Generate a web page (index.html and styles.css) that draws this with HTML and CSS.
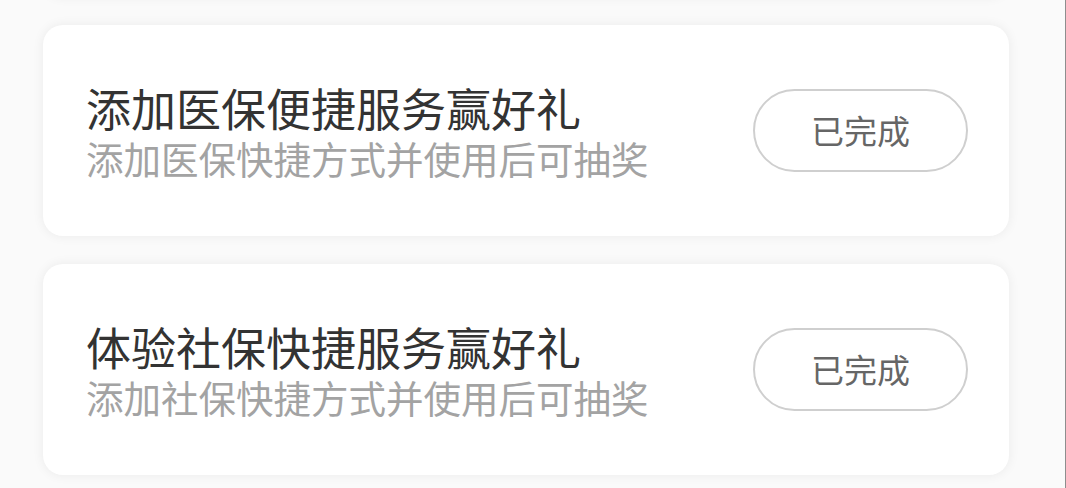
FILE: index.html
```html
<!DOCTYPE html>
<html lang="zh-CN">
<head>
  <meta charset="UTF-8">
  <meta name="viewport" content="width=device-width, initial-scale=1">
  <title>任务列表</title>
  <link rel="stylesheet" href="styles.css">
</head>
<body>
  <div class="wrap">
    <ul class="task-list">
      <!-- previous card, scrolled out of view -->
      <li class="task"></li>
      <li class="task">
        <div class="task-info">
          <h3 class="task-title">添加医保便捷服务赢好礼</h3>
          <p class="task-desc">添加医保快捷方式并使用后可抽奖</p>
        </div>
        <span class="task-btn">已完成</span>
      </li>
      <li class="task">
        <div class="task-info">
          <h3 class="task-title">体验社保快捷服务赢好礼</h3>
          <p class="task-desc">添加社保快捷方式并使用后可抽奖</p>
        </div>
        <span class="task-btn">已完成</span>
      </li>
    </ul>
  </div>
</body>
</html>
```

FILE: styles.css
```css
* {
  margin: 0;
  padding: 0;
  box-sizing: border-box;
}
html, body {
  width: 100%;
  height: 100%;
}
body {
  font-family: "Noto Sans CJK SC", "Noto Sans", sans-serif;
  color: #333;
  background: #fafafa;
  overflow: hidden;
}
.wrap {
  height: 100%;
  border-right: 1px solid #8e8e8e;
  overflow: hidden;
}
.task-list {
  list-style: none;
  margin-top: -214px;
  padding: 0 56px 0 43px;
  display: flex;
  flex-direction: column;
  gap: 28px;
}
.task {
  height: 211px;
  display: flex;
  align-items: center;
  justify-content: space-between;
  padding: 0 41px 0 43px;
  background: #fff;
  border-radius: 20px;
  box-shadow: 0 0 12px rgba(0, 0, 0, .065);
}
.task-title {
  font-size: 45px;
  font-weight: normal;
  line-height: 54px;
  color: #333;
}
.task-desc {
  font-size: 37.5px;
  line-height: 46px;
  color: #a3a3a3;
}
.task-btn {
  width: 215px;
  height: 83px;
  line-height: 79px;
  text-align: center;
  font-size: 33px;
  color: #666;
  border: 2px solid #cfcfcf;
  border-radius: 42px;
}
```
